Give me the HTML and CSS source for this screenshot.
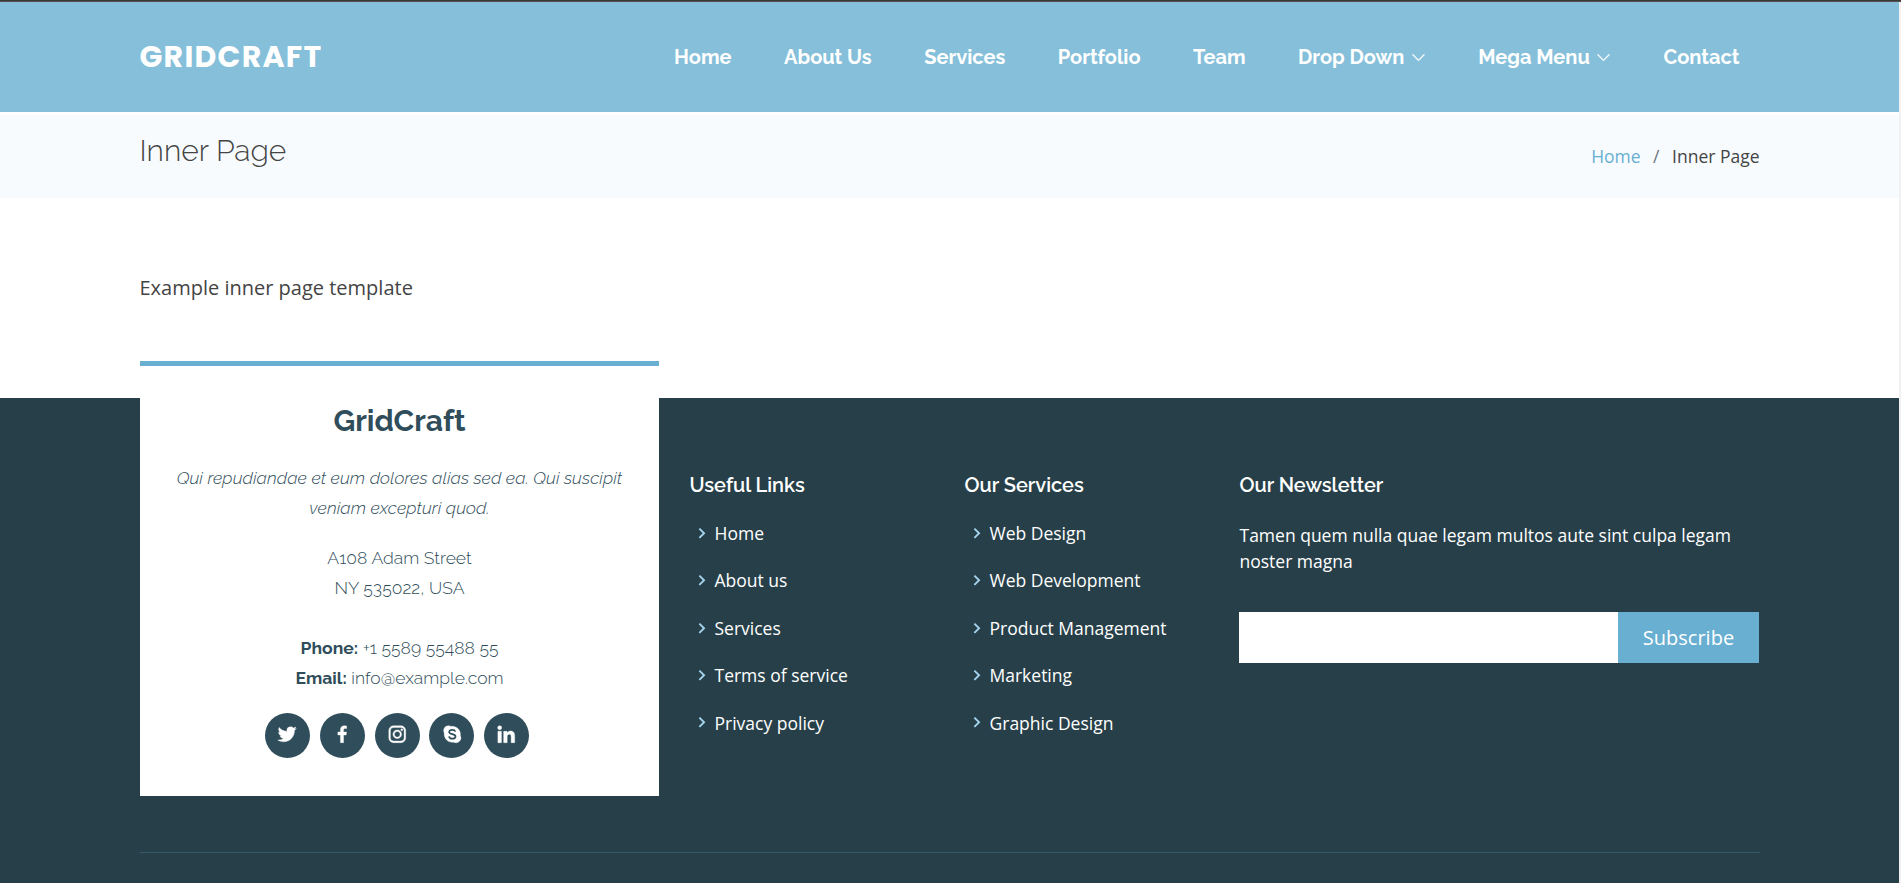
FILE: index.html
```
<!DOCTYPE html>
<html lang="en">
<head>
<meta charset="utf-8">
<title>Inner Page - GridCraft</title>
<link rel="stylesheet" href="styles.css">
</head>
<body>
<svg class="defs" width="0" height="0">
  <symbol id="down" viewBox="0 0 16 16"><path d="M1.65 4.65a.5.5 0 0 1 .7 0L8 10.3l5.65-5.65a.5.5 0 0 1 .7.7l-6 6a.5.5 0 0 1-.7 0l-6-6a.5.5 0 0 1 0-.7z"/></symbol>
  <symbol id="right" viewBox="0 0 24 24"><path d="M10.707 17.707 16.414 12l-5.707-5.707-1.414 1.414L13.586 12l-4.293 4.293z"/></symbol>
</svg>
<div class="topline"></div>
<div class="viewport">
<div class="page">
  <header class="header">
    <div class="container header-row">
      <a class="logo">GRIDCRAFT</a>
      <nav class="nav">
        <a>Home</a><a>About Us</a><a>Services</a><a>Portfolio</a><a>Team</a>
        <a>Drop Down<svg class="caret"><use href="#down"/></svg></a>
        <a>Mega Menu<svg class="caret"><use href="#down"/></svg></a>
        <a>Contact</a>
      </nav>
    </div>
  </header>
  <section class="breadcrumbs">
    <div class="container crumbs-row">
      <h2>Inner Page</h2>
      <ol><li><a>Home</a></li><li>Inner Page</li></ol>
    </div>
  </section>
  <section class="inner"><div class="container"><p>Example inner page template</p></div></section>
  <footer class="footer">
    <div class="container footer-row">
      <div class="info">
        <h3>GridCraft</h3>
        <p class="about"><em>Qui repudiandae et eum dolores alias sed ea. Qui suscipit<br>veniam excepturi quod.</em></p>
        <p>A108 Adam Street<br>NY 535022, USA<br><br><strong>Phone:</strong> +1 5589 55488 55<br><strong>Email:</strong> info@example.com</p>
        <div class="social">
          <a><svg viewBox="0 0 24 24"><path d="M19.633 7.997c.013.175.013.349.013.523 0 5.325-4.053 11.461-11.46 11.461-2.282 0-4.402-.661-6.186-1.809.324.037.636.05.973.05a8.07 8.07 0 0 0 5.001-1.721 4.036 4.036 0 0 1-3.767-2.793c.249.037.499.062.761.062.361 0 .724-.05 1.061-.137a4.027 4.027 0 0 1-3.23-3.953v-.05c.537.299 1.16.486 1.82.511a4.022 4.022 0 0 1-1.796-3.354c0-.748.199-1.434.548-2.032a11.457 11.457 0 0 0 8.306 4.215c-.062-.3-.1-.611-.1-.923a4.026 4.026 0 0 1 4.028-4.028c1.16 0 2.207.486 2.943 1.272a7.957 7.957 0 0 0 2.556-.973 4.02 4.02 0 0 1-1.771 2.22 8.073 8.073 0 0 0 2.319-.624 8.645 8.645 0 0 1-2.019 2.083z"/></svg></a>
          <a><svg viewBox="0 0 24 24"><path d="M13.397 20.997v-8.196h2.765l.411-3.209h-3.176V7.548c0-.926.258-1.56 1.587-1.56h1.684V3.127A22.336 22.336 0 0 0 14.201 3c-2.444 0-4.122 1.492-4.122 4.231v2.355H7.332v3.209h2.753v8.202h3.312z"/></svg></a>
          <a><svg viewBox="0 0 24 24"><path fill-rule="evenodd" d="M8 3h8a5 5 0 0 1 5 5v8a5 5 0 0 1-5 5H8a5 5 0 0 1-5-5V8a5 5 0 0 1 5-5zm.2 1.7a3.5 3.5 0 0 0-3.5 3.5v7.6a3.5 3.5 0 0 0 3.500 3.500h7.600a3.500 3.500 0 0 0 3.500-3.500V8.200a3.500 3.500 0 0 0-3.500-3.500zM12 7.380a4.620 4.620 0 1 1 0 9.240 4.620 4.620 0 0 1 0-9.240zm0 1.620a3 3 0 1 0 0 6 3 3 0 0 0 0-6z"/><circle cx="16.800" cy="7.200" r="1.080"/></svg></a>
          <a><svg viewBox="0 0 24 24"><path d="M8 2.900a5.200 5.200 0 0 1 2.600.7A8.700 8.700 0 0 1 20.600 13.400a5.200 5.200 0 0 1-7.100 7A8.700 8.700 0 0 1 3.500 10.700 5.200 5.200 0 0 1 8 2.900z"/><path class="cut" d="M15.300 9.200C14.900 7.900 13.700 7.300 12 7.300c-2 0-3.300.9-3.300 2.300 0 3.200 6.800 1.400 6.800 4.700 0 1.500-1.400 2.400-3.400 2.400-2.100 0-3.300-.9-3.500-2.500"/></svg></a>
          <a><svg viewBox="0 0 24 24"><circle cx="4.983" cy="5.009" r="2.188"/><path d="M9.237 8.855v12.139h3.769v-6.003c0-1.584.298-3.118 2.262-3.118 1.937 0 1.961 1.811 1.961 3.218v5.904H21v-6.657c0-3.270-.704-5.783-4.526-5.783-1.835 0-3.065 1.007-3.568 1.960h-.051v-1.660H9.237zm-6.142 0H6.870v12.139H3.095z"/></svg></a>
        </div>
      </div>
      <div class="links">
        <h4>Useful Links</h4>
        <ul>
          <li><svg><use href="#right"/></svg><a>Home</a></li>
          <li><svg><use href="#right"/></svg><a>About us</a></li>
          <li><svg><use href="#right"/></svg><a>Services</a></li>
          <li><svg><use href="#right"/></svg><a>Terms of service</a></li>
          <li><svg><use href="#right"/></svg><a>Privacy policy</a></li>
        </ul>
      </div>
      <div class="links">
        <h4>Our Services</h4>
        <ul>
          <li><svg><use href="#right"/></svg><a>Web Design</a></li>
          <li><svg><use href="#right"/></svg><a>Web Development</a></li>
          <li><svg><use href="#right"/></svg><a>Product Management</a></li>
          <li><svg><use href="#right"/></svg><a>Marketing</a></li>
          <li><svg><use href="#right"/></svg><a>Graphic Design</a></li>
        </ul>
      </div>
      <div class="newsletter">
        <h4>Our Newsletter</h4>
        <p>Tamen quem nulla quae legam multos aute sint culpa legam noster magna</p>
        <form><input type="email" aria-label="Email"><button type="button">Subscribe</button></form>
      </div>
    </div>
    <div class="container rule"></div>
  </footer>
</div>
<div class="scrollbar"></div>
</div>
</body>
</html>
```
FILE: styles.css
```
* { box-sizing: border-box; }
body { margin: 0; height: 883px; overflow: hidden; display: flex; flex-direction: column; background: #fff; color: #444; font-family: "Open Sans", sans-serif; font-size: 20px; line-height: 30px; }
h2, h3, h4, p, ul, ol { margin: 0; padding: 0; }
ul, ol { list-style: none; }
svg { fill: currentColor; }
.defs { position: absolute; }
.topline { flex: none; height: 2px; background: #3b3838; border-bottom: 1px solid #565053; }
.viewport { flex: 1; display: flex; min-height: 0; }
.page { flex: 1; display: flex; flex-direction: column; min-width: 0; }
.scrollbar { width: 2px; background: #f1f1f1; }
.container { width: 1620px; margin: 0 auto; }

.header { height: 110px; background: #85bfda; color: #fff; }
.header-row { display: flex; justify-content: space-between; align-items: center; height: 110px; }
.logo { font: 700 30px/38px Poppins, sans-serif; letter-spacing: 1.25px; }
.nav { display: flex; gap: 52.5px; padding-right: 20px; font: 700 20px/24px Raleway, sans-serif; }
.nav a { display: flex; align-items: center; }
.caret { width: 15px; height: 15px; margin-left: 6.25px; stroke: currentColor; stroke-width: .4px; }

.breadcrumbs { height: 83px; margin-top: 3px; background: #f7fbfe; }
.crumbs-row { display: flex; justify-content: space-between; padding-top: 18px; }
.crumbs-row h2 { font: 300 30px/36px Raleway, sans-serif; }
.crumbs-row ol { display: flex; padding-top: 10px; font-size: 17.5px; line-height: 26px; }
.crumbs-row li + li::before { content: "/"; padding: 0 12.5px; color: #6c757d; }
.crumbs-row li a { color: #68afd1; }

.inner { height: 200px; padding-top: 75px; }

.footer { flex: 1; background: #273f49; color: #fff; }
.footer-row { display: grid; grid-template-columns: 519px 245px 245px 520px; column-gap: 30px; height: 454px; align-items: start; }
.info { height: 435px; margin-top: -37px; padding: 37px 0 0 1px; border-top: 5px solid #68afd1; background: #fff; color: #2f4d5a; text-align: center; font: 300 17.5px/30px Raleway, sans-serif; }
.info h3 { font: 700 30px/36px Raleway, sans-serif; margin-bottom: 24px; }
.info p { font-weight: 330; letter-spacing: .04px; }
.info .about { margin-bottom: 20px; letter-spacing: .07px; }
.info strong { font-weight: 700; }
.social { display: flex; gap: 9.75px; justify-content: center; margin: 20px 5px 0 0; }
.social a { display: flex; justify-content: center; width: 45px; height: 45px; padding-top: 10px; border-radius: 50%; background: #2f4d5a; color: #fff; }
.social svg { width: 22.5px; height: 22.5px; stroke: currentColor; stroke-width: .4px; }
.social .cut { fill: none; stroke: #2f4d5a; stroke-width: 1.8; }

.footer h4 { font: 600 20px/24px Raleway, sans-serif; padding-top: 75px; margin-bottom: 25px; }
.links, .newsletter { padding-left: 1px; }
.links ul { font-size: 17.5px; line-height: 22px; }
.links li { display: flex; align-items: center; height: 22px; margin-bottom: 25.4px; }
.links svg { width: 22.5px; height: 22.5px; margin-right: 2.5px; color: #a5d5ee; }
.newsletter p { font-size: 17.5px; line-height: 26.25px; }
.newsletter form { display: flex; height: 51px; margin: 37px 0 0 -1px; }
.newsletter input { flex: 1; min-width: 0; border: 0; padding: 0 10px; background: #fff; }
.newsletter button { width: 141px; border: 0; padding: 2px 0 0 1px; background: #68afd1; color: #fff; font: 400 20px/30px "Open Sans", sans-serif; }
.rule { height: 1px; background: #36596a; }
```
